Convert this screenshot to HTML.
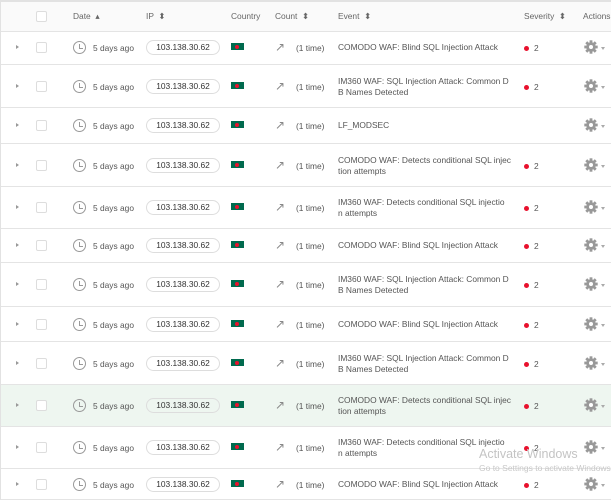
<!DOCTYPE html>
<html><head><style>
body{margin:0;width:611px;height:500px;overflow:hidden;background:#fff;font-family:"Liberation Sans",sans-serif;color:#555;font-size:8.4px;position:relative}
.top{position:absolute;left:0;top:0;width:611px;height:2px;background:#e2e2e2}
.lb{position:absolute;left:0;top:0;width:1px;height:500px;background:#e2e2e2}
.hdr{position:absolute;left:1px;top:2px;width:610px;height:29px;background:#fafafa;border-bottom:1px solid #e4e4e4}
.h{position:absolute;top:9px;color:#666;font-size:8.4px}
.row{position:absolute;left:1px;width:610px;border-bottom:1px solid #e4e4e4}
.row>*{position:absolute}
.ar{left:15px;width:0;height:0;border-left:3px solid #999;border-top:2px solid transparent;border-bottom:2px solid transparent}
.cb{left:35px;width:9px;height:9px;border:1px solid #ddd;border-radius:2px;background:#fff}
.ck{left:72px;width:11px;height:11px;border:1.3px solid #999;border-radius:50%}
.ck:after{content:"";position:absolute;left:5px;top:2px;width:2.5px;height:3.5px;border-left:1.2px solid #999;border-bottom:1.2px solid #999}
.dt{left:92px}
.ip{left:145px;width:72px;height:13px;border:1px solid #ddd;border-radius:8px;text-align:center;line-height:13px;color:#333}
.fl{left:230px;width:13px;height:7px;background:#006a4e}
.fl:after{content:"";position:absolute;left:4px;top:1.5px;width:4px;height:4px;border-radius:50%;background:#e8112d}
.cn{left:274px}
.tm{left:295px}
.ev{left:337px;line-height:11px}
.dot{left:523px;width:5px;height:5px;border-radius:50%;background:#e8112d}
.sv{left:533px}
.g{left:583px;width:14px;height:14px}
.cr{left:600px;width:0;height:0;border-top:3px solid #aaa;border-left:2.5px solid transparent;border-right:2.5px solid transparent}
.wm{position:absolute;left:479px;top:447px;color:#c4c4c4;font-size:12.5px;white-space:nowrap}
.wm2{position:absolute;left:479px;top:463px;color:#c8c8c8;font-size:8.5px;white-space:nowrap}
</style></head><body>
<div class="top"></div>
<div class="hdr">
<div style="position:absolute;left:35px;top:9px;width:9px;height:9px;border:1px solid #ddd;border-radius:2px;background:#fff"></div>
<div class="h" style="left:72px">Date &nbsp;▴</div>
<div class="h" style="left:145px">IP &nbsp;⬍</div>
<div class="h" style="left:230px">Country</div>
<div class="h" style="left:274px">Count &nbsp;⬍</div>
<div class="h" style="left:337px">Event &nbsp;⬍</div>
<div class="h" style="left:523px">Severity &nbsp;⬍</div>
<div class="h" style="left:582px">Actions</div>
</div>
<div class="lb"></div>

<div id="rows"></div>
<script>
var A="COMODO WAF: Blind SQL Injection Attack",B="IM360 WAF: SQL Injection Attack: Common D<br>B Names Detected",C="COMODO WAF: Detects conditional SQL injec<br>tion attempts",D="IM360 WAF: Detects conditional SQL injectio<br>n attempts";
var R=[[31,34,A],[65,43,B],[108,36,"LF_MODSEC",1],[144,43,C],[187,42,D],[229,34,A],[263,44,B],[307,35,A],[342,43,B],[385,42,C,0,1],[427,42,D],[469,31,A]];
var G='<svg viewBox="0 0 14 14" width="14" height="14"><g fill="#999"><circle cx="7" cy="7" r="4.8"/>'+
[0,45,90,135,180,225,270,315].map(function(a){return '<rect x="5.6" y="0.3" width="2.8" height="3" transform="rotate('+a+' 7 7)"/>';}).join("")+
'</g><circle cx="7" cy="7" r="2" fill="#fff"/></svg>';
var h="";
R.forEach(function(r){var t=r[0],H=r[1],c=Math.round(H/2);var two=r[2].indexOf("<br>")>0;
h+='<div class="row" style="top:'+t+'px;height:'+(H-1)+'px;'+(r[4]?'background:#eef6f0':'')+'">'+
'<div class="ar" style="top:'+(c-3)+'px"></div>'+
'<div class="cb" style="top:'+(c-6)+'px"></div>'+
'<div class="ck" style="top:'+(c-7)+'px"></div>'+
'<div class="dt" style="top:'+(c-5)+'px">5 days ago</div>'+
'<div class="ip" style="top:'+(c-8)+'px">103.138.30.62</div>'+
'<div class="fl" style="top:'+(c-5)+'px"></div>'+
'<div class="cn" style="top:'+(c-8)+'px;font-size:12px;color:#888">&#8599;</div>'+
'<div class="tm" style="top:'+(c-5)+'px">(1 time)</div>'+
'<div class="ev" style="top:'+(two?c-11:c-6)+'px">'+r[2]+'</div>'+
(r[3]?'':'<div class="dot" style="top:'+(c-2)+'px"></div><div class="sv" style="top:'+(c-5)+'px">2</div>')+
'<div class="g" style="top:'+(c-8)+'px">'+G+'</div>'+
'<div class="cr" style="top:'+(c-1)+'px"></div></div>';});
document.getElementById("rows").innerHTML=h;
</script>
<div class="wm">Activate Windows</div>
<div class="wm2">Go to Settings to activate Windows.</div>
</body></html>
